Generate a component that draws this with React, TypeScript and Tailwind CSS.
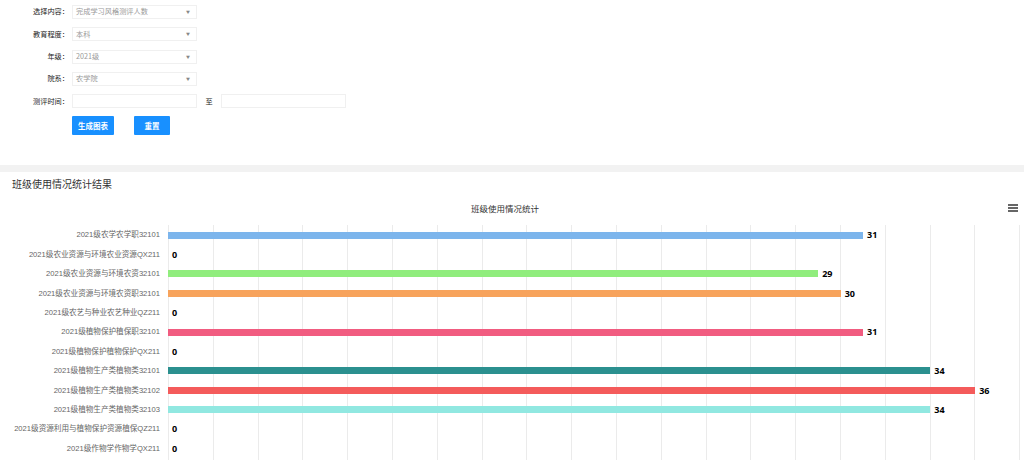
import React from "react";

const colors = [
  "#7cb5ec",
  "#434348",
  "#90ed7d",
  "#f7a35c",
  "#8085e9",
  "#f15c80",
  "#e4d354",
  "#2b908f",
  "#f45b5b",
  "#91e8e1",
];

const rows = [
  { name: "2021级农学农学职32101", value: 31 },
  { name: "2021级农业资源与环境农业资源QX211", value: 0 },
  { name: "2021级农业资源与环境农资32101", value: 29 },
  { name: "2021级农业资源与环境农资职32101", value: 30 },
  { name: "2021级农艺与种业农艺种业QZ211", value: 0 },
  { name: "2021级植物保护植保职32101", value: 31 },
  { name: "2021级植物保护植物保护QX211", value: 0 },
  { name: "2021级植物生产类植物类32101", value: 34 },
  { name: "2021级植物生产类植物类32102", value: 36 },
  { name: "2021级植物生产类植物类32103", value: 34 },
  { name: "2021级资源利用与植物保护资源植保QZ211", value: 0 },
  { name: "2021级作物学作物学QX211", value: 0 },
];

// x axis runs 0..38, 852px wide
const maxValue = 38;
const plotWidth = 852;

const selects = [
  { label: "选择内容：", value: "完成学习风格测评人数" },
  { label: "教育程度：", value: "本科" },
  { label: "年级：", value: "2021级" },
  { label: "院系：", value: "农学院" },
];

const App: React.FC = () => {
  return (
    <div className="min-h-screen bg-white font-['Noto_Sans_CJK_SC',sans-serif] overflow-hidden">
      {/* query form */}
      <div className="flex flex-col gap-[8.3px] pt-[5px]">
        {selects.map((s) => (
          <div key={s.label} className="flex items-center h-[14px]">
            <div className="w-[69px] text-right text-[7.2px] text-[#222] leading-none">
              {s.label}
            </div>
            <div className="ml-[3px] w-[125px] h-[14px] border border-[#f0f0f0] flex items-center justify-between px-[3px]">
              <span className="text-[7.2px] text-[#999] leading-none">
                {s.value}
              </span>
              <span className="text-[4px] text-[#888] leading-none mr-[3px]">
                ▼
              </span>
            </div>
          </div>
        ))}
        <div className="flex items-center h-[14px]">
          <div className="w-[69px] text-right text-[7.2px] text-[#222] leading-none">
            测评时间：
          </div>
          <div className="ml-[3px] w-[125px] h-[14px] border border-[#f0f0f0]" />
          <div className="w-[24px] text-center text-[7.2px] text-[#222] leading-none">
            至
          </div>
          <div className="w-[125px] h-[14px] border border-[#f0f0f0]" />
        </div>
        <div className="flex items-center pl-[72px] gap-[20px]">
          <button className="w-[42px] h-[19px] bg-[#1890ff] text-white text-[7.5px] font-bold rounded-[1px]">
            生成图表
          </button>
          <button className="w-[36px] h-[19px] bg-[#1890ff] text-white text-[7.5px] font-bold rounded-[1px]">
            重置
          </button>
        </div>
      </div>

      <div className="mt-[30px] h-[7px] bg-[#f2f2f2]" />

      {/* results */}
      <div className="pt-[5px]">
        <h2 className="pl-[12px] text-[10px] leading-[14px] text-[#333]">
          班级使用情况统计结果
        </h2>
        <div className="relative w-[1010px] mt-[11px] text-center text-[8.5px] leading-[12px] text-[#333]">
          班级使用情况统计
          <div className="absolute right-[-8px] top-[2px] flex flex-col gap-[1.5px]">
            <span className="block w-[10px] h-[1.5px] bg-[#666]" />
            <span className="block w-[10px] h-[1.5px] bg-[#666]" />
            <span className="block w-[10px] h-[1.5px] bg-[#666]" />
          </div>
        </div>

        <div className="flex mt-[11px] font-['Liberation_Sans','Noto_Sans_CJK_SC',sans-serif]">
          <div className="w-[168px] flex flex-col">
            {rows.map((r) => (
              <div
                key={r.name}
                className="h-[19.4px] flex items-center justify-end pr-[8px] text-[7.6px] text-[#666] whitespace-nowrap"
              >
                {r.name}
              </div>
            ))}
          </div>
          <div className="relative w-[852px]">
            <div className="absolute inset-0 flex">
              {Array.from({ length: 19 }).map((_, i) => (
                <div key={i} className="flex-1 border-l border-[#ebebeb]" />
              ))}
              <div className="border-l border-[#ebebeb]" />
            </div>
            <div className="relative flex flex-col">
              {rows.map((r, i) => (
                <div key={r.name} className="h-[19.4px] flex items-center">
                  {r.value > 0 && (
                    <div
                      className="h-[7px]"
                      style={{
                        width: (r.value / maxValue) * plotWidth,
                        backgroundColor: colors[i % colors.length],
                      }}
                    />
                  )}
                  <span className="ml-[4px] text-[9px] font-bold text-black font-['Open_Sans',sans-serif]">
                    {r.value}
                  </span>
                </div>
              ))}
              <div className="h-[20px]" />
            </div>
          </div>
        </div>
      </div>
    </div>
  );
};

export default App;
